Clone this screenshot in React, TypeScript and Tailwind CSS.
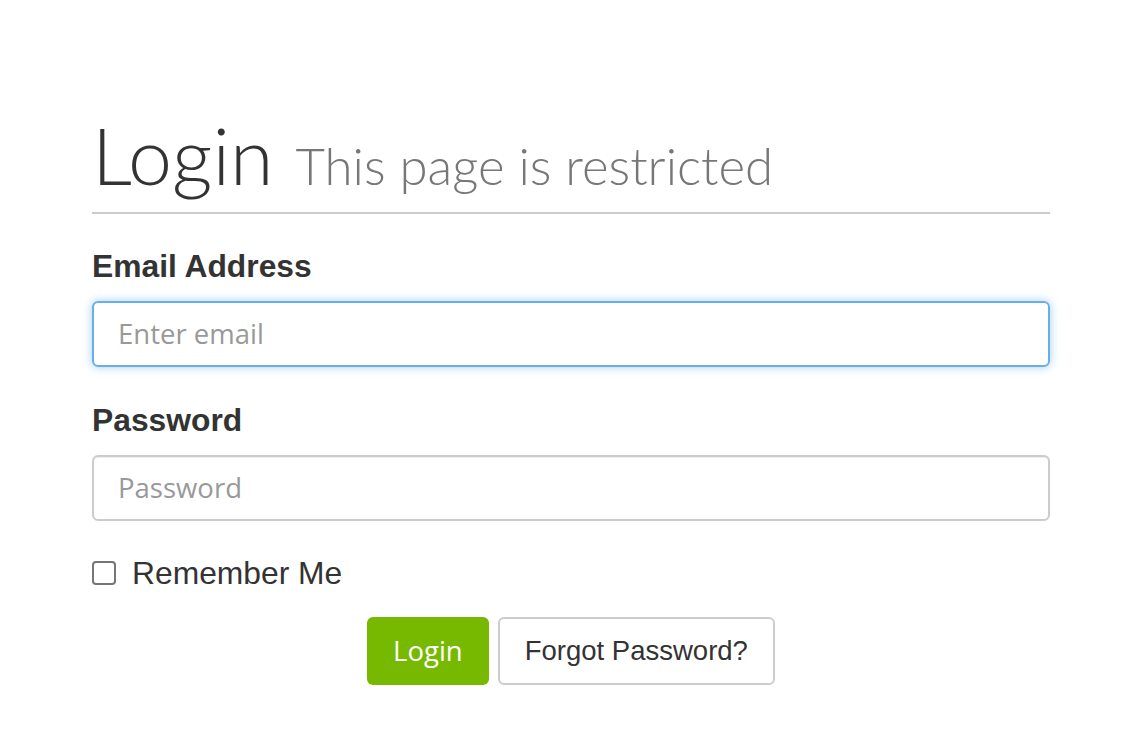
export default function App() {
  return (
    <div className="min-h-[755px] bg-white">
      <div className="ml-[92px] w-[958px] pt-[110px]">
        <div className="flex items-baseline gap-[22px] border-b-2 border-[#cccccc] pb-[7px]">
          <h1 className="font-['Lato',sans-serif] text-[79px] font-light leading-[90px] text-[#333333]">
            Login
          </h1>
          <span className="font-['Lato',sans-serif] text-[51px] font-light text-[#777777]">
            This page is restricted
          </span>
        </div>

        <form className="mt-[33px] font-['Liberation_Sans',Arial,sans-serif]">
          <label className="block text-[31.8px] font-bold leading-[38px] text-[#333333]">
            Email Address
          </label>
          <input
            type="email"
            autoFocus
            placeholder="Enter email"
            className="mt-[16px] block h-[66px] w-full rounded-[6px] border-2 border-[#66afe9] px-[24px] font-['Open_Sans',sans-serif] text-[27.5px] text-[#555555] shadow-[0_0_10px_rgba(102,175,233,0.6)] outline-none placeholder:text-[#999999]"
          />

          <label className="mt-[34px] block text-[31.8px] font-bold leading-[38px] text-[#333333]">
            Password
          </label>
          <input
            type="password"
            placeholder="Password"
            className="mt-[16px] block h-[66px] w-full rounded-[6px] border-2 border-[#cccccc] px-[24px] font-['Open_Sans',sans-serif] text-[27.5px] text-[#555555] shadow-[inset_0_1px_1px_rgba(0,0,0,0.075)] outline-none placeholder:text-[#999999]"
          />

          <label className="mt-[33px] flex h-[38px] items-center gap-[16px] text-[31.8px] leading-[38px] text-[#333333]">
            <input
              type="checkbox"
              className="m-0 h-[24px] w-[24px] appearance-none rounded-[4px] border-2 border-[#767676] bg-white"
            />
            Remember Me
          </label>

          <div className="mt-[25px] flex justify-center gap-[9px]">
            <button
              type="button"
              className="h-[68px] rounded-[6px] bg-[#76b900] px-[26px] font-['Open_Sans',sans-serif] text-[27.5px] text-white"
            >
              Login
            </button>
            <button
              type="button"
              className="h-[68px] rounded-[6px] border-2 border-[#cccccc] bg-white px-[25px] text-[27.5px] text-[#333333]"
            >
              Forgot Password?
            </button>
          </div>
        </form>
      </div>
    </div>
  )
}
